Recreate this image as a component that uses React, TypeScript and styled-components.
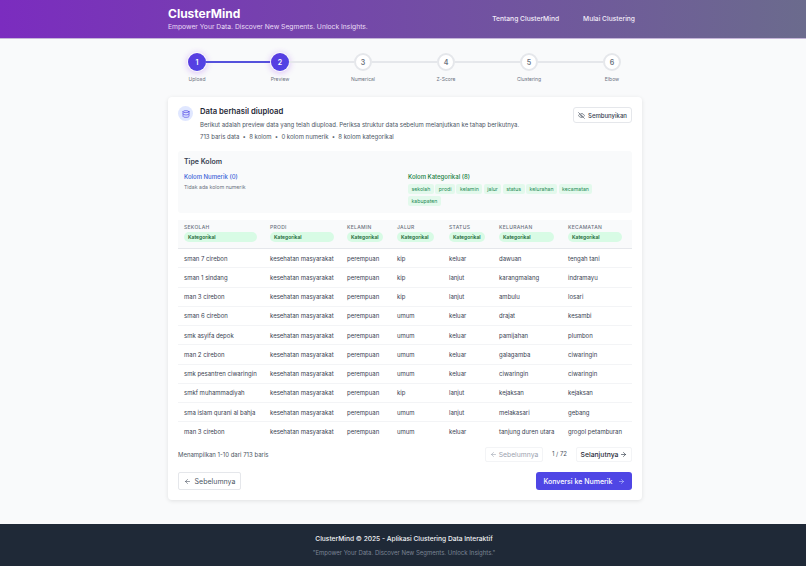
import * as React from "react";
import styled, { createGlobalStyle } from "styled-components";
import { ArrowLeft, ArrowRight, Database, EyeOff } from "lucide-react";

const GlobalStyle = createGlobalStyle`
  * {
    box-sizing: border-box;
  }
  html, body {
    margin: 0;
    padding: 0;
    background: #f9fafb;
    font-family: Inter, "Noto Sans", sans-serif;
    color: #1f2937;
  }
`;

const Page = styled.div`
  width: 806px;
  height: 566px;
  display: flex;
  flex-direction: column;
  overflow: hidden;
`;

const Header = styled.header`
  height: 39px;
  flex: none;
  padding: 0 171px 0 168px;
  display: flex;
  align-items: center;
  justify-content: space-between;
  background: linear-gradient(90deg, #7b2cbf 0%, #6b6b8d 100%);
  border-bottom: 1px solid #c4b5d8;
  color: #fff;
`;

const Brand = styled.div`
  display: flex;
  flex-direction: column;
  gap: 1px;
`;

const BrandName = styled.div`
  font-size: 12px;
  line-height: 14px;
  font-weight: 700;
`;

const Tagline = styled.div`
  font-size: 6.75px;
  line-height: 9px;
  color: #e9dcf5;
`;

const Nav = styled.nav`
  display: flex;
  gap: 24px;
  font-size: 6.7px;
  font-weight: 500;
  color: #f3edf9;
`;

const Main = styled.main`
  flex: 1;
  width: 474px;
  margin-left: 168px;
  padding-top: 14px;
`;

const Stepper = styled.div`
  display: flex;
  padding: 0 21px 0 20px;
  height: 44px;
`;

const Step = styled.div`
  width: 18px;
  flex: none;
  display: flex;
  flex-direction: column;
  align-items: center;
`;

const Circle = styled.div<{ $active?: boolean }>`
  width: 18px;
  height: 18px;
  flex: none;
  border-radius: 50%;
  display: flex;
  align-items: center;
  justify-content: center;
  font-size: 7px;
  font-weight: 600;
  background: ${(p) => (p.$active ? "linear-gradient(135deg, #5b3ae0, #4f46e5)" : "#fff")};
  color: ${(p) => (p.$active ? "#fff" : "#6b7280")};
  border: ${(p) => (p.$active ? "none" : "2px solid #e5e7eb")};
  box-shadow: ${(p) => (p.$active ? "0 0 0 1px #f9fafb, 0 1px 6px 1px rgba(147, 51, 234, 0.3)" : "none")};
`;

const StepLabel = styled.div`
  margin-top: 5px;
  font-size: 5px;
  line-height: 6px;
  white-space: nowrap;
  color: #6b7280;
`;

const Connector = styled.div<{ $done?: boolean }>`
  flex: 1;
  height: 2px;
  margin-top: 8px;
  background: ${(p) => (p.$done ? "#5552dc" : "#e5e7eb")};
`;

const Card = styled.section`
  height: 403px;
  padding: 10px;
  background: #fff;
  border-radius: 4px;
  box-shadow: 0 1px 4px rgba(0, 0, 0, 0.1);
`;

const CardTop = styled.div`
  display: flex;
  align-items: flex-start;
  height: 44px;
`;

const IconBubble = styled.div`
  width: 15px;
  height: 15px;
  flex: none;
  margin-top: -1px;
  border-radius: 50%;
  background: #e0e7ff;
  color: #4f46e5;
  display: flex;
  align-items: center;
  justify-content: center;
`;

const Intro = styled.div`
  flex: 1;
  margin-left: 7px;
`;

const IntroTitle = styled.div`
  font-size: 7.7px;
  line-height: 10px;
  font-weight: 600;
  color: #1f2937;
`;

const IntroText = styled.div`
  margin-top: 3px;
  font-size: 6px;
  line-height: 9px;
  color: #4b5563;
`;

const Stats = styled.div`
  margin-top: 3px;
  display: flex;
  gap: 3.2px;
  font-size: 6px;
  line-height: 9px;
  color: #4b5563;
`;

const HideButton = styled.button`
  width: 59px;
  height: 16px;
  display: flex;
  align-items: center;
  justify-content: center;
  gap: 3px;
  padding: 0;
  background: #fff;
  border: 1px solid #e5e7eb;
  border-radius: 3px;
  font-family: inherit;
  font-size: 6px;
  font-weight: 500;
  color: #374151;
`;

const TypeBox = styled.div`
  height: 62px;
  padding: 6px;
  background: #f9fafb;
  border-radius: 3px;
`;

const TypeTitle = styled.div`
  font-size: 7px;
  line-height: 10px;
  font-weight: 600;
  color: #374151;
`;

const TypeColumns = styled.div`
  margin-top: 6px;
  display: grid;
  grid-template-columns: 224px 1fr;
`;

const TypeHeading = styled.div<{ $color: string }>`
  font-size: 6px;
  line-height: 8px;
  font-weight: 500;
  color: ${(p) => p.$color};
`;

const EmptyNote = styled.div`
  margin-top: 3px;
  font-size: 5.2px;
  line-height: 7px;
  color: #6b7280;
`;

const ChipRow = styled.div`
  margin-top: 3px;
  max-width: 192px;
  display: flex;
  flex-wrap: wrap;
  gap: 2px 1.5px;
`;

const Chip = styled.span`
  height: 10px;
  padding: 0 3.5px;
  display: flex;
  align-items: center;
  border-radius: 2px;
  background: #e3f9ec;
  font-size: 5.2px;
  color: #1f8a55;
`;

const Table = styled.table`
  width: 454px;
  margin-top: 7px;
  border-collapse: collapse;
  table-layout: fixed;
`;

const Th = styled.th<{ $width: number }>`
  width: ${(p) => p.$width}px;
  height: 28.5px;
  padding: 0 6px 2px;
  background: #f9fafb;
  border-bottom: 1px solid #e5e7eb;
  text-align: left;
  font-size: 5px;
  font-weight: 500;
  letter-spacing: 0.3px;
  color: #6b7280;
`;

const TypeBadge = styled.div<{ $width: number }>`
  width: ${(p) => p.$width}px;
  height: 10px;
  margin-top: 2px;
  padding: 0 4px;
  display: flex;
  align-items: center;
  border-radius: 5px;
  background: #d8fbe5;
  font-size: 5px;
  font-weight: 600;
  letter-spacing: 0;
  color: #166534;
`;

const Tr = styled.tr`
  height: 19.25px;
  border-bottom: 1px solid #f3f4f6;
  &:last-child {
    border-bottom: none;
  }
`;

const Td = styled.td`
  padding: 0 6px;
  font-size: 6px;
  color: #374151;
  white-space: nowrap;
`;

const Pagination = styled.div`
  margin-top: 6px;
  display: flex;
  align-items: center;
`;

const PageInfo = styled.div`
  flex: 1;
  font-size: 6px;
  color: #4b5563;
`;

const PageButton = styled.button<{ $disabled?: boolean; $width: number }>`
  width: ${(p) => p.$width}px;
  height: 15px;
  padding: 0;
  display: flex;
  align-items: center;
  justify-content: center;
  gap: 2px;
  background: #fff;
  border: 1px solid #f3f4f6;
  border-radius: 2px;
  font-family: inherit;
  font-size: 6.8px;
  font-weight: ${(p) => (p.$disabled ? 400 : 500)};
  color: ${(p) => (p.$disabled ? "#9ca3af" : "#1f2937")};
`;

const PageCount = styled.div`
  margin: 0 9px 2px;
  font-size: 6px;
  color: #4b5563;
`;

const Actions = styled.div`
  margin-top: 10px;
  display: flex;
  justify-content: space-between;
`;

const BackButton = styled.button`
  width: 63px;
  height: 18px;
  display: flex;
  align-items: center;
  justify-content: center;
  gap: 4px;
  padding: 0;
  background: #fff;
  border: 1px solid #e5e7eb;
  border-radius: 2px;
  font-family: inherit;
  font-size: 7px;
  color: #4b5563;
`;

const PrimaryButton = styled.button`
  width: 96px;
  height: 18px;
  display: flex;
  align-items: center;
  justify-content: center;
  gap: 5px;
  padding: 0;
  background: #4f46e5;
  border: none;
  border-radius: 3px;
  font-family: inherit;
  font-size: 7px;
  font-weight: 500;
  color: #fff;
  svg {
    color: #c7d2fe;
  }
`;

const Footer = styled.footer`
  height: 42px;
  flex: none;
  display: flex;
  flex-direction: column;
  align-items: center;
  justify-content: center;
  gap: 6px;
  padding-top: 1px;
  padding-left: 2px;
  background: #1f2937;
`;

const FooterTitle = styled.div`
  font-size: 6.65px;
  line-height: 8px;
  font-weight: 500;
  color: #f3f4f6;
`;

const FooterQuote = styled.div`
  font-size: 6px;
  line-height: 7px;
  color: #7b8494;
`;

const steps = ["Upload", "Preview", "Numerical", "Z-Score", "Clustering", "Elbow"];
const chips = ["sekolah", "prodi", "kelamin", "jalur", "status", "kelurahan", "kecamatan", "kabupaten"];
const columns: [string, number, number][] = [
  ["SEKOLAH", 86, 73],
  ["PRODI", 77, 64],
  ["KELAMIN", 50, 36],
  ["JALUR", 52, 37],
  ["STATUS", 50, 36],
  ["KELURAHAN", 69, 55],
  ["KECAMATAN", 70, 54],
];
const rows = [
  ["sman 7 cirebon", "kesehatan masyarakat", "perempuan", "kip", "keluar", "dawuan", "tengah tani"],
  ["sman 1 sindang", "kesehatan masyarakat", "perempuan", "kip", "lanjut", "karangmalang", "indramayu"],
  ["man 3 cirebon", "kesehatan masyarakat", "perempuan", "kip", "lanjut", "ambulu", "losari"],
  ["sman 6 cirebon", "kesehatan masyarakat", "perempuan", "umum", "keluar", "drajat", "kesambi"],
  ["smk asyifa depok", "kesehatan masyarakat", "perempuan", "umum", "keluar", "pamijahan", "plumbon"],
  ["man 2 cirebon", "kesehatan masyarakat", "perempuan", "umum", "keluar", "galagamba", "ciwaringin"],
  ["smk pesantren ciwaringin", "kesehatan masyarakat", "perempuan", "umum", "keluar", "ciwaringin", "ciwaringin"],
  ["smkf muhammadiyah", "kesehatan masyarakat", "perempuan", "kip", "lanjut", "kejaksan", "kejaksan"],
  ["sma islam qurani al bahja", "kesehatan masyarakat", "perempuan", "umum", "lanjut", "melakasari", "gebang"],
  ["man 3 cirebon", "kesehatan masyarakat", "perempuan", "umum", "keluar", "tanjung duren utara", "grogol petamburan"],
];

export default function App() {
  return (
    <Page>
      <GlobalStyle />
      <Header>
        <Brand>
          <BrandName>ClusterMind</BrandName>
          <Tagline>Empower Your Data. Discover New Segments. Unlock Insights.</Tagline>
        </Brand>
        <Nav>
          <span>Tentang ClusterMind</span>
          <span>Mulai Clustering</span>
        </Nav>
      </Header>
      <Main>
        <Stepper>
          {steps.map((label, i) => (
            <React.Fragment key={label}>
              <Step>
                <Circle $active={i < 2}>{i + 1}</Circle>
                <StepLabel>{label}</StepLabel>
              </Step>
              {i < steps.length - 1 && <Connector $done={i === 0} />}
            </React.Fragment>
          ))}
        </Stepper>
        <Card>
          <CardTop>
            <IconBubble>
              <Database size={8} strokeWidth={2} />
            </IconBubble>
            <Intro>
              <IntroTitle>Data berhasil diupload</IntroTitle>
              <IntroText>
                Berikut adalah preview data yang telah diupload. Periksa struktur data sebelum melanjutkan ke tahap berikutnya.
              </IntroText>
              <Stats>
                <span>713 baris data</span>
                <span>•</span>
                <span>8 kolom</span>
                <span>•</span>
                <span>0 kolom numerik</span>
                <span>•</span>
                <span>8 kolom kategorikal</span>
              </Stats>
            </Intro>
            <HideButton>
              <EyeOff size={7} strokeWidth={2} />
              Sembunyikan
            </HideButton>
          </CardTop>
          <TypeBox>
            <TypeTitle>Tipe Kolom</TypeTitle>
            <TypeColumns>
              <div>
                <TypeHeading $color="#3b63d8">Kolom Numerik (0)</TypeHeading>
                <EmptyNote>Tidak ada kolom numerik</EmptyNote>
              </div>
              <div>
                <TypeHeading $color="#15803d">Kolom Kategorikal (8)</TypeHeading>
                <ChipRow>
                  {chips.map((c) => (
                    <Chip key={c}>{c}</Chip>
                  ))}
                </ChipRow>
              </div>
            </TypeColumns>
          </TypeBox>
          <Table>
            <thead>
              <tr>
                {columns.map(([name, width, badge]) => (
                  <Th key={name} $width={width}>
                    {name}
                    <TypeBadge $width={badge}>Kategorikal</TypeBadge>
                  </Th>
                ))}
              </tr>
            </thead>
            <tbody>
              {rows.map((row, i) => (
                <Tr key={i}>
                  {row.map((cell, j) => (
                    <Td key={j}>{cell}</Td>
                  ))}
                </Tr>
              ))}
            </tbody>
          </Table>
          <Pagination>
            <PageInfo>Menampilkan 1-10 dari 713 baris</PageInfo>
            <PageButton $disabled $width={58}>
              <ArrowLeft size={7} />
              Sebelumnya
            </PageButton>
            <PageCount>1 / 72</PageCount>
            <PageButton $width={56}>
              Selanjutnya
              <ArrowRight size={7} />
            </PageButton>
          </Pagination>
          <Actions>
            <BackButton>
              <ArrowLeft size={7} />
              Sebelumnya
            </BackButton>
            <PrimaryButton>
              Konversi ke Numerik
              <ArrowRight size={7} />
            </PrimaryButton>
          </Actions>
        </Card>
      </Main>
      <Footer>
        <FooterTitle>ClusterMind © 2025 - Aplikasi Clustering Data Interaktif</FooterTitle>
        <FooterQuote>"Empower Your Data. Discover New Segments. Unlock Insights."</FooterQuote>
      </Footer>
    </Page>
  );
}
